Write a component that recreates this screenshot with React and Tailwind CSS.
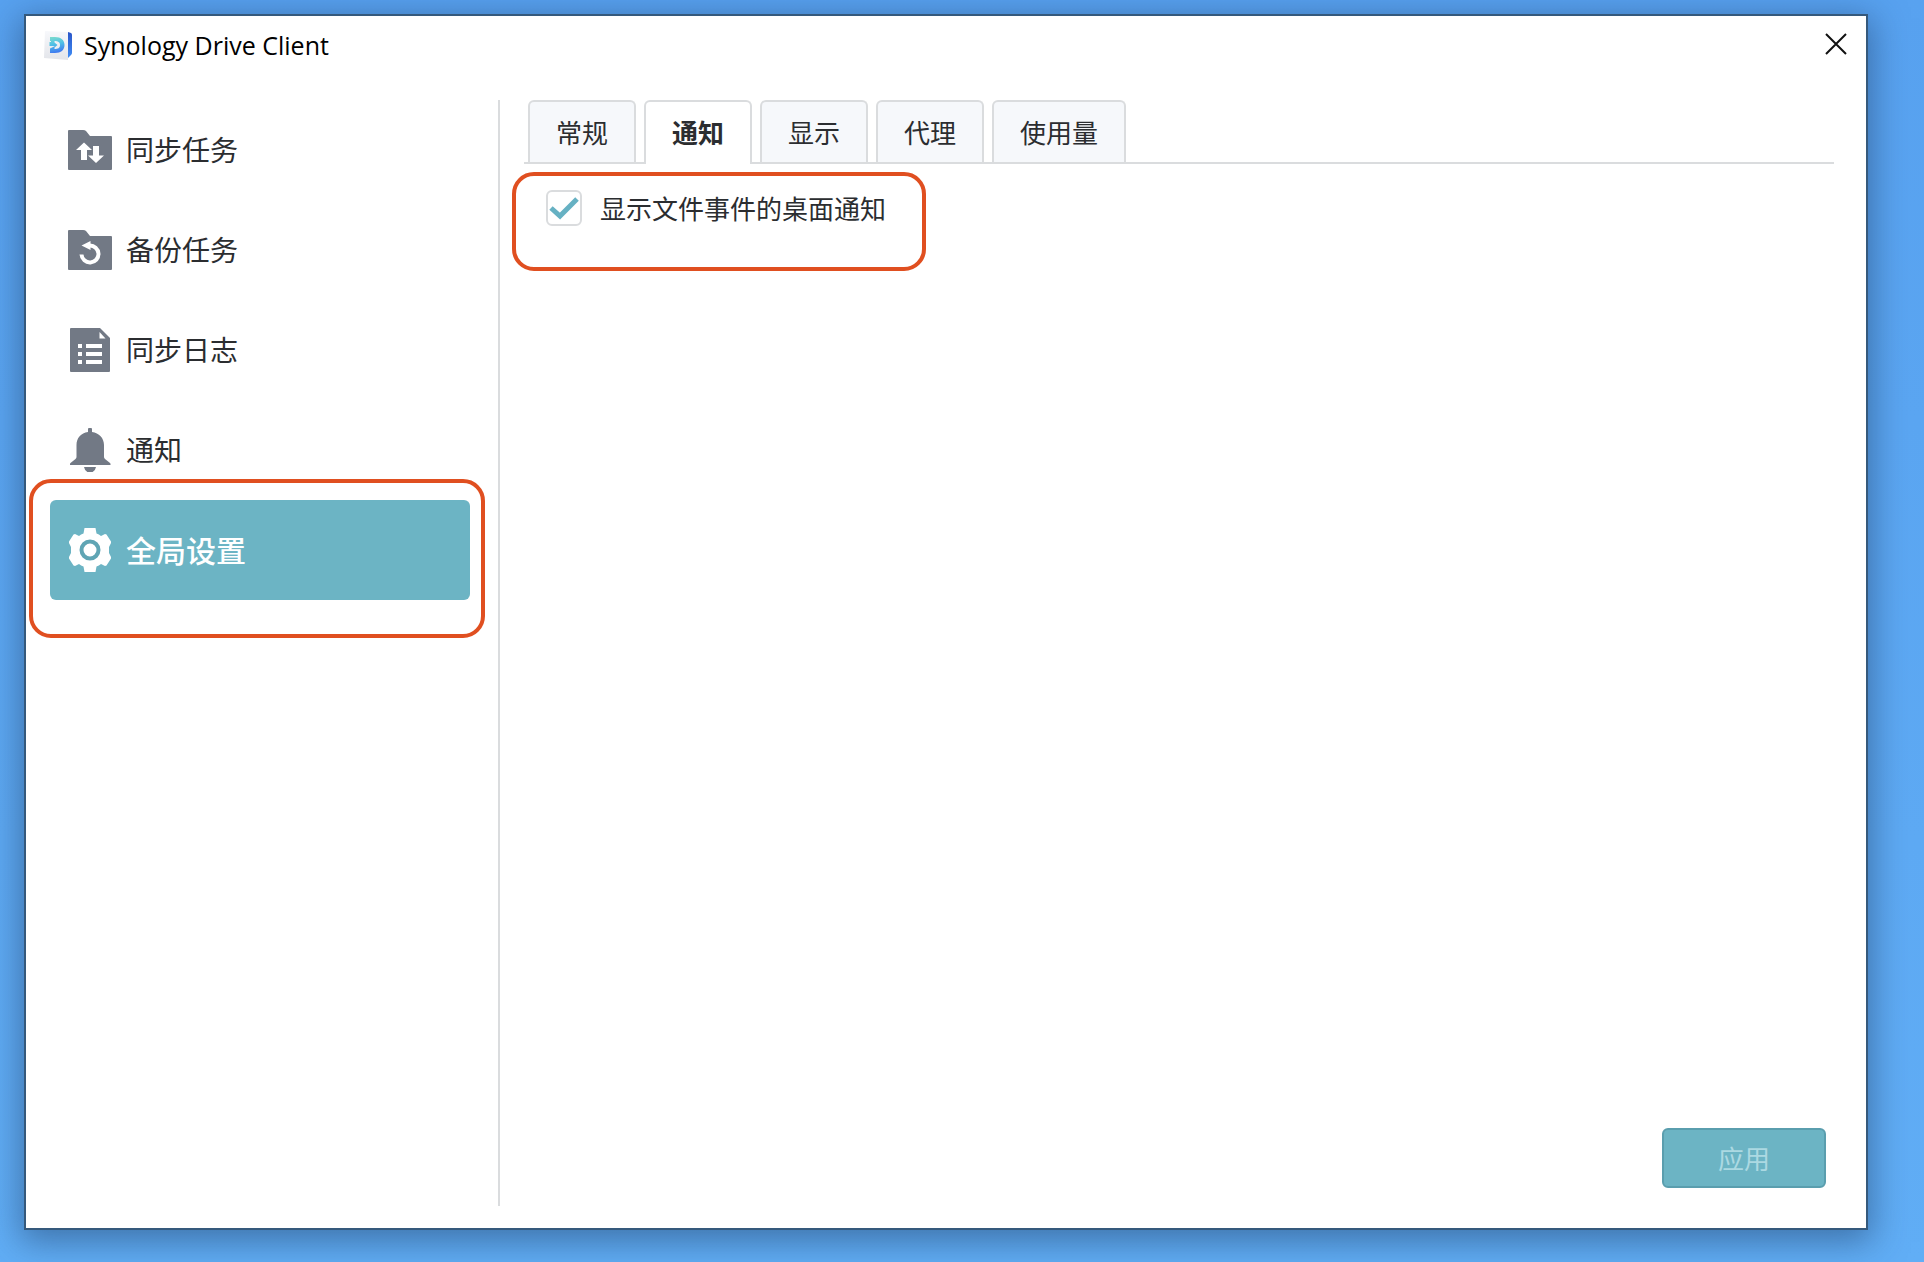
import { useState } from "react";

const NAV_ITEMS = [
    { id: "sync", label: "同步任务", Icon: SyncFolderIcon },
    { id: "backup", label: "备份任务", Icon: BackupFolderIcon },
    { id: "log", label: "同步日志", Icon: LogIcon },
    { id: "notice", label: "通知", Icon: BellIcon },
    { id: "settings", label: "全局设置", Icon: GearIcon },
];

const TABS = ["常规", "通知", "显示", "代理", "使用量"];

function DriveLogo() {
    return (
        <svg className="h-8 w-8" viewBox="0 0 32 32" aria-hidden="true">
            <defs>
                <linearGradient id="drive-d" x1="0" y1="0" x2="0.2" y2="1">
                    <stop offset="0" stopColor="#7edccb" />
                    <stop offset="0.5" stopColor="#4fc0e6" />
                    <stop offset="1" stopColor="#3f7cf0" />
                </linearGradient>
                <linearGradient id="drive-edge" x1="0" y1="0" x2="0" y2="1">
                    <stop offset="0" stopColor="#2a55c8" />
                    <stop offset="1" stopColor="#3f8df5" />
                </linearGradient>
                <linearGradient id="drive-page" x1="0" y1="0" x2="0" y2="1">
                    <stop offset="0" stopColor="#f7f8fb" />
                    <stop offset="1" stopColor="#e3e5ea" />
                </linearGradient>
            </defs>
            <path d="M3 1l23 1v28L2 28z" fill="url(#drive-page)" />
            <path d="M26 2l3 1q1 .500 1 2v18q0 1-1 2l-3 3z" fill="url(#drive-edge)" />
            <path d="M8 7h5c6 0 9.500 3 9.500 8s-3.500 8-9.500 8H8v-4.500l5-2.500H7.500v-4H9V11H8zM12.500 11v1.500l3 2.500-3 2.500V19c3.500 0 5.500-1 5.500-4s-2-4-5.500-4z" fill="url(#drive-d)" fillRule="evenodd" />
        </svg>
    );
}

function SyncFolderIcon() {
    return (
        <svg className="h-11 w-11" viewBox="0 0 44 44" aria-hidden="true">
            <path d="M1 2h14q2 0 3 1l4 5h21q1 0 1 1v32q0 1-1 1H1q-1 0-1-1V3q0-1 1-1z" fill="#727985" />
            <path d="M16 14.500l8 7.500h-5v10h-6V22H8zM28 35l-8-7.500h5V18h6v9.500h5z" fill="#fff" />
        </svg>
    );
}

function BackupFolderIcon() {
    return (
        <svg className="h-11 w-11" viewBox="0 0 44 44" aria-hidden="true">
            <path d="M1 2h14q2 0 3 1l4 5h21q1 0 1 1v32q0 1-1 1H1q-1 0-1-1V3q0-1 1-1z" fill="#727985" />
            <path d="M13.500 26.500a8.500 8.500 0 1 0 8-9" fill="none" stroke="#fff" strokeWidth="4" />
            <path d="M13.500 17.500l9-4.500v9z" fill="#fff" />
        </svg>
    );
}

function LogIcon() {
    return (
        <svg className="h-11 w-11" viewBox="0 0 44 44" aria-hidden="true">
            <path d="M3 0h29l10 10v33q0 1-1 1H3q-1 0-1-1V1q0-1 1-1z" fill="#727985" />
            <path d="M31.500 4v6.500h6z" fill="#fff" />
            <path d="M10 16h4v4h-4zM18 16h16v4H18zM10 24h4v4h-4zM18 24h16v4H18zM10 32h4v4h-4zM18 32h16v4H18z" fill="#fff" />
        </svg>
    );
}

function BellIcon() {
    return (
        <svg className="h-11 w-11" viewBox="0 0 44 44" aria-hidden="true">
            <path d="M20 1q0-1 1-1h2q1 0 1 1v3c7 1 12 6 12 13v12q0 1 1 2l5 4q.500.500.500 1v1H2v-1q0-.500.500-1l5-4q1-1 1-2V17C8.500 10 13 5 20 4z" fill="#727985" />
            <path d="M16 39h12q-1 5.500-6 5.500T16 39z" fill="#727985" />
        </svg>
    );
}

function GearIcon() {
    return (
        <svg className="h-11 w-11" viewBox="0 0 44 44" aria-hidden="true">
            <path
                d="M16.500 0h11l1 5.500q2.500.800 4.500 2.500l4-2 1.500.500L43 13.500v1.500l-2 4v6l2 4v1.500L38.500 37.500 37 38l-4-2q-2 1.700-4.500 2.500l-1 5.500h-11l-1-5.500Q13 37.700 11 36l-4 2-1.500-.500L1 30.500V29l2-4v-6l-2-4v-1.500L5.500 6.500 7 6l4 2q2-1.700 4.500-2.500z"
                fill="#fff"
            />
            <circle cx="22" cy="22" r="8.500" fill="#fff" stroke="#5fa5b4" strokeWidth="4" />
        </svg>
    );
}

export default function App() {
    const [page, setPage] = useState("settings");
    const [tab, setTab] = useState("通知");
    const [desktopNotice, setDesktopNotice] = useState(true);

    return (
        <div className="flex min-h-screen bg-linear-to-b from-[#58a2f0] to-[#61aef6] pt-[14px] pr-14 pb-8 pl-6 font-['Noto_Sans_CJK_SC',sans-serif] text-[#2b2d30]">
            <main className="flex flex-1 flex-col border-2 border-[#35597c] bg-white shadow-[0_8px_32px_4px_rgba(30,60,100,0.5)]">
                <header className="flex h-[60px] items-center gap-2.5 px-4">
                    <DriveLogo />
                    <h1 className="flex-1 font-['Open_Sans',sans-serif] text-[25px] text-black">Synology Drive Client</h1>
                    <button type="button" aria-label="关闭" className="pb-1">
                        <svg className="h-7 w-7" viewBox="0 0 28 28" aria-hidden="true">
                            <path d="M4 4l20 20M24 4L4 24" stroke="#111" strokeWidth="2" />
                        </svg>
                    </button>
                </header>

                <div className="flex flex-1 pt-6 pb-[22px] pl-6">
                    <nav className="w-[450px] shrink-0 border-r-2 border-[#dadcde] pr-7">
                        {NAV_ITEMS.map(({ id, label, Icon }) => (
                            <div key={id} className="relative">
                                <button
                                    type="button"
                                    onClick={() => setPage(id)}
                                    className={
                                        page === id
                                            ? "flex h-[100px] w-full items-center gap-3.5 rounded-md bg-[#6cb4c4] pl-[18px] text-[30px] font-medium text-white"
                                            : "flex h-[100px] w-full items-center gap-3.5 pl-[18px] text-[28px]"
                                    }
                                >
                                    <Icon />
                                    <span className="pb-0.5">{label}</span>
                                </button>
                                {/* marcação em volta do item destacado */}
                                {id === "settings" && (
                                    <span className="pointer-events-none absolute -top-[21px] -right-[15px] -bottom-[38px] -left-[21px] rounded-[22px] border-4 border-[#e04f20]" />
                                )}
                            </div>
                        ))}
                    </nav>

                    <section className="flex flex-1 flex-col pr-8 pl-6">
                        <div role="tablist" className="flex gap-2 border-b-2 border-[#dadcde] pl-1">
                            {TABS.map((name) => (
                                <button
                                    key={name}
                                    type="button"
                                    role="tab"
                                    aria-selected={tab === name}
                                    onClick={() => setTab(name)}
                                    className={
                                        tab === name
                                            ? "-mb-0.5 h-16 rounded-t-md border-2 border-b-0 border-[#dadcde] bg-white px-[26px] pb-1 text-[26px] font-bold"
                                            : "h-[62px] rounded-t-md border-2 border-b-0 border-[#dadcde] bg-[#f6f8fb] px-[26px] pb-0.5 text-[26px]"
                                    }
                                >
                                    {name}
                                </button>
                            ))}
                        </div>

                        <div className="relative mt-2 -ml-3 flex h-[99px] w-[414px] items-start pt-[18px] pl-[34px]">
                            <label className="flex items-center gap-[18px] text-[26px] leading-9">
                                <span className="grid h-9 w-9 place-items-center">
                                    <input
                                        type="checkbox"
                                        checked={desktopNotice}
                                        onChange={(e) => setDesktopNotice(e.target.checked)}
                                        className="col-start-1 row-start-1 h-9 w-9 appearance-none rounded-md border-2 border-[#dadcde] bg-white"
                                    />
                                    {desktopNotice && (
                                        <svg className="pointer-events-none col-start-1 row-start-1 h-9 w-9" viewBox="0 0 36 36" aria-hidden="true">
                                            <path d="M5 18l9 8L31 9" fill="none" stroke="#66b1c3" strokeWidth="5" />
                                        </svg>
                                    )}
                                </span>
                                显示文件事件的桌面通知
                            </label>
                            <span className="pointer-events-none absolute inset-0 rounded-[22px] border-4 border-[#e04f20]" />
                        </div>

                        <div className="mt-auto flex justify-end pr-2 pb-[18px]">
                            <button
                                type="button"
                                disabled
                                className="h-[60px] w-[164px] rounded-md border-2 border-[#5a9eae] bg-[#6cb4c4] pb-0.5 text-[26px] text-[#acd9e2]"
                            >
                                应用
                            </button>
                        </div>
                    </section>
                </div>
            </main>
        </div>
    );
}
